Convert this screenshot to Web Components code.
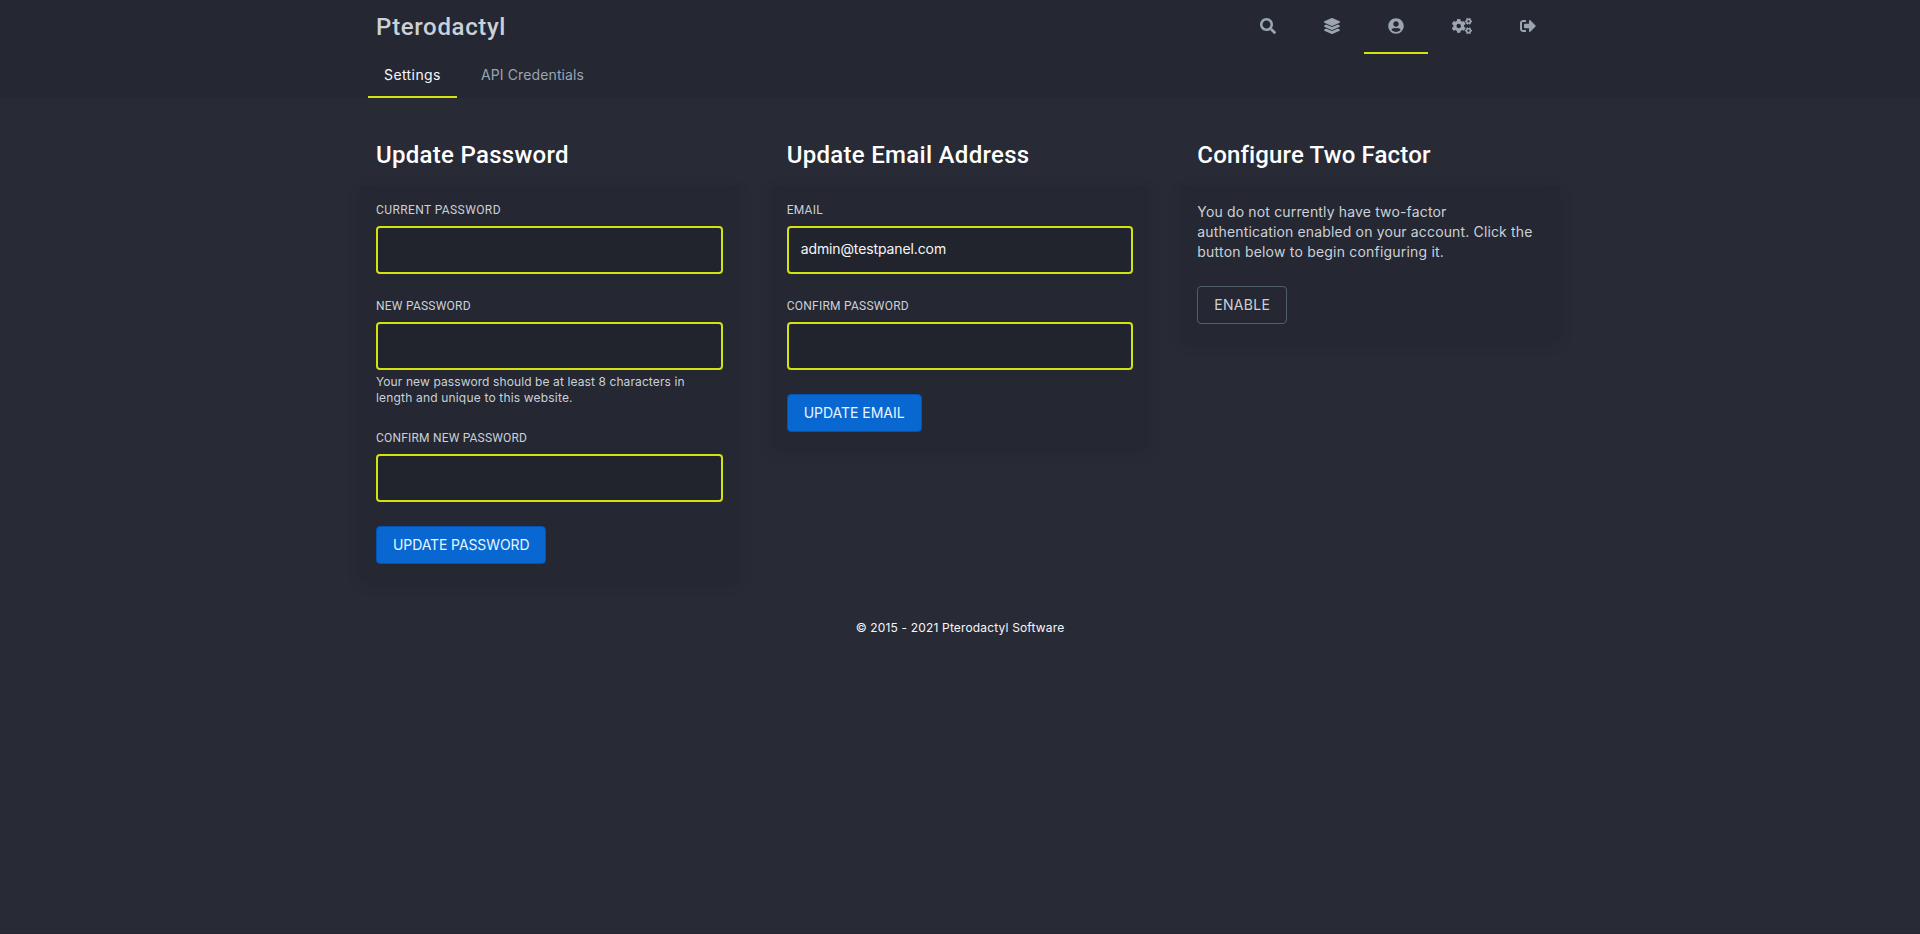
<!DOCTYPE html>
<html lang="en">
<head>
<meta charset="utf-8">
<title>Pterodactyl</title>
<style>
html, body { margin: 0; height: 100%; }
body { background: #282a36; color: #cad1d8; font-family: Roboto, "Liberation Sans", sans-serif; overflow: hidden; }
</style>
</head>
<body>
<account-page></account-page>
<script>
const define = (name, html, setup) => {
  const t = document.createElement('template');
  t.innerHTML = html;
  customElements.define(name, class extends HTMLElement {
    constructor() {
      super();
      this.attachShadow({ mode: 'open' }).append(t.content.cloneNode(true));
    }
    connectedCallback() { if (setup) setup(this, this.shadowRoot); }
  });
};

const smallGear = 'M512.1 191l-8.2 14.3c-3 5.3-9.4 7.5-15.1 5.4-11.8-4.4-22.6-10.7-32.1-18.6-4.6-3.8-5.8-10.5-2.8-15.7l8.2-14.3c-6.9-8-12.3-17.3-15.9-27.4h-16.5c-6 0-11.2-4.3-12.2-10.3-2-12-2.1-24.6 0-37.1 1-6 6.2-10.4 12.2-10.4h16.5c3.6-10.1 9-19.4 15.9-27.4l-8.2-14.3c-3-5.2-1.9-11.9 2.8-15.7 9.5-7.9 20.4-14.2 32.1-18.6 5.7-2.1 12.1.1 15.1 5.4l8.2 14.3c10.5-1.9 21.2-1.9 31.7 0L552 6.3c3-5.3 9.4-7.5 15.1-5.4 11.8 4.4 22.6 10.7 32.1 18.6 4.6 3.8 5.8 10.5 2.8 15.7l-8.2 14.3c6.9 8 12.3 17.3 15.9 27.4h16.5c6 0 11.2 4.3 12.2 10.3 2 12 2.1 24.6 0 37.1-1 6-6.2 10.4-12.2 10.4h-16.5c-3.6 10.1-9 19.4-15.9 27.4l8.2 14.3c3 5.2 1.9 11.9-2.8 15.7-9.5 7.9-20.4 14.2-32.1 18.6-5.7 2.1-12.1-.1-15.1-5.4l-8.2-14.3c-10.4 1.9-21.2 1.9-31.7 0zm-10.5-58.8c38.5 29.6 82.4-14.3 52.8-52.8-38.5-29.7-82.4 14.3-52.8 52.8z';
const icons = {
  search: [512, '<path d="M505 442.7L405.3 343c-4.5-4.5-10.6-7-17-7H372c27.6-35.3 44-79.7 44-128C416 93.1 322.9 0 208 0S0 93.1 0 208s93.1 208 208 208c48.3 0 92.7-16.4 128-44v16.3c0 6.4 2.5 12.5 7 17l99.7 99.7c9.4 9.4 24.6 9.4 33.9 0l28.3-28.3c9.4-9.4 9.4-24.6.1-34zM208 336c-70.7 0-128-57.2-128-128 0-70.7 57.2-128 128-128 70.7 0 128 57.2 128 128 0 70.7-57.2 128-128 128z"/>'],
  layers: [512, '<path d="M12.41 148.02l232.94 105.67c6.8 3.09 14.49 3.09 21.29 0l232.94-105.67c16.55-7.51 16.55-32.52 0-40.03L266.65 2.31a25.607 25.607 0 0 0-21.29 0L12.41 107.98c-16.55 7.51-16.55 32.53 0 40.04zm487.18 88.28l-58.09-26.33-161.64 73.27c-7.56 3.43-15.59 5.17-23.86 5.17s-16.29-1.74-23.86-5.17L70.51 209.97l-58.1 26.33c-16.55 7.5-16.55 32.5 0 40l232.94 105.59c6.8 3.08 14.49 3.08 21.29 0L499.59 276.3c16.55-7.5 16.55-32.5 0-40zm0 127.8l-57.87-26.23-161.86 73.37c-7.56 3.43-15.59 5.17-23.86 5.17s-16.29-1.74-23.86-5.17L70.29 337.87 12.41 364.1c-16.55 7.5-16.55 32.5 0 40l232.94 105.59c6.8 3.08 14.49 3.08 21.29 0L499.59 404.1c16.55-7.5 16.55-32.5 0-40z"/>'],
  user: [496, '<path d="M248 8C111 8 0 119 0 256s111 248 248 248 248-111 248-248S385 8 248 8zm0 96c48.6 0 88 39.4 88 88s-39.4 88-88 88-88-39.4-88-88 39.4-88 88-88zm0 344c-58.7 0-111.3-26.6-146.5-68.2 18.8-35.4 55.6-59.8 98.5-59.8 2.4 0 4.8.4 7.1 1.1 13 4.2 26.6 6.9 40.9 6.9 14.3 0 28-2.7 40.9-6.9 2.3-.7 4.7-1.1 7.1-1.1 42.9 0 79.7 24.4 98.5 59.8C359.3 421.4 306.7 448 248 448z"/>'],
  cogs: [640, `<path d="${smallGear}"/><path transform="translate(0 300.3)" d="${smallGear}"/><path d="M386.3 286.1l33.7 16.8c10.1 5.8 14.5 18.1 10.5 29.1-8.9 24.2-26.4 46.4-42.6 65.8-7.4 8.9-20.2 11.1-30.3 5.3l-29.1-16.8c-16 13.7-34.6 24.6-54.9 31.7v33.6c0 11.6-8.3 21.6-19.7 23.6-24.6 4.2-50.4 4.4-75.9 0-11.5-2-20-11.9-20-23.6V418c-20.3-7.2-38.9-18-54.9-31.7L74 403c-10 5.8-22.9 3.6-30.3-5.3-16.2-19.4-33.3-41.6-42.2-65.7-4-10.9.4-23.2 10.5-29.1l33.3-16.8c-3.9-20.9-3.9-42.4 0-63.4L12 205.8c-10.1-5.8-14.6-18.1-10.5-29 8.9-24.2 26-46.4 42.2-65.8 7.4-8.9 20.2-11.1 30.3-5.3l29.1 16.8c16-13.7 34.6-24.6 54.9-31.7V57.1c0-11.5 8.2-21.5 19.6-23.5 24.6-4.2 50.5-4.4 76-.1 11.5 2 20 11.9 20 23.6v33.6c20.3 7.2 38.9 18 54.9 31.7l29.1-16.8c10-5.8 22.9-3.6 30.3 5.3 16.2 19.4 33.2 41.6 42.1 65.8 4 10.9.1 23.2-10 29.1l-33.7 16.8c3.9 21 3.9 42.5 0 63.5zm-117.6 21.1c59.2-77-28.7-164.9-105.7-105.7-59.2 77 28.7 164.9 105.7 105.7z"/>`],
  logout: [512, '<path d="M497 273L329 441c-15 15-41 4.5-41-17v-96H152c-13.3 0-24-10.7-24-24v-96c0-13.3 10.7-24 24-24h136V88c0-21.4 25.9-32 41-17l168 168c9.3 9.4 9.3 24.6 0 34zM192 436v-40c0-6.6-5.4-12-12-12H96c-17.7 0-32-14.3-32-32V160c0-17.7 14.3-32 32-32h84c6.6 0 12-5.4 12-12V76c0-6.6-5.4-12-12-12H96c-53 0-96 43-96 96v192c0 53 43 96 96 96h84c6.6 0 12-5.4 12-12z"/>']
};

/* One line of text with its own tracking; "wide" switches to the broader face */
define('text-line', `<style>
:host { display: block; white-space: nowrap; }
:host([wide]) { font-family: Inter, Roboto, sans-serif; }
</style><slot></slot>`, el => { el.style.letterSpacing = el.getAttribute('track') + 'px'; });

define('nav-icon', `<style>
:host { display: flex; box-sizing: border-box; height: 54px; padding: 18px 24px 0; color: #9aa5b1; border-bottom: 2px solid transparent; }
:host([active]) { border-bottom-color: #d2e212; }
svg { display: block; width: 16px; height: 16px; fill: currentColor; }
:host([name="cogs"]) svg { width: 20px; }
</style><svg></svg>`, (el, root) => {
  const [w, body] = icons[el.getAttribute('name')];
  const svg = root.querySelector('svg');
  svg.setAttribute('viewBox', `0 0 ${w} 512`);
  svg.innerHTML = body;
});

define('nav-tab', `<style>
:host { display: block; box-sizing: border-box; height: 44px; padding: 11px 0 0 16px; font-size: 14px; line-height: 20px; color: #9aa5b1; border-bottom: 2px solid transparent; }
:host([active]) { width: 89px; color: #f5f7fa; border-bottom-color: #d2e212; }
</style><slot></slot>`);

define('top-bar', `<style>
:host { display: block; height: 98px; background: #252732; }
.in { width: 1200px; margin: 0 auto; }
.row { display: flex; justify-content: space-between; height: 54px; }
.brand { padding: 11px 0 0 16px; font-size: 24px; font-weight: 500; line-height: 32px; }
nav { display: flex; }
.tabs { gap: 8px; padding-left: 8px; }
</style>
<div class="in">
  <div class="row">
    <div class="brand"><text-line track="0.65">Pterodactyl</text-line></div>
    <nav><nav-icon name="search"></nav-icon><nav-icon name="layers"></nav-icon><nav-icon name="user" active></nav-icon><nav-icon name="cogs"></nav-icon><nav-icon name="logout"></nav-icon></nav>
  </div>
  <nav class="tabs">
    <nav-tab active><text-line wide track="0.41">Settings</text-line></nav-tab>
    <nav-tab><text-line wide track="0.118">API Credentials</text-line></nav-tab>
  </nav>
</div>`);

define('content-box', `<style>
:host { display: block; flex: 1 1 0; min-width: 0; }
.title { padding: 1px 16px 15px; color: #fff; font-size: 24px; font-weight: 500; line-height: 32px; }
.card { padding: 16px; background: #252732; border-radius: 4px; box-shadow: 0 4px 15px 0 rgba(0,0,0,.1); }
</style><div class="title"><slot name="title"></slot></div><div class="card"><slot></slot></div>`);

define('form-field', `<style>
:host { display: block; margin-bottom: 24px; }
.label { font-size: 12px; line-height: 16px; margin-bottom: 8px; }
.box { box-sizing: border-box; height: 48px; padding: 11px 12px 0; background: #21242c; border: 2px solid #d2e212; border-radius: 4px; color: #f5f7fa; font-size: 14px; line-height: 20px; }
.hint { font-size: 12px; line-height: 16px; padding-top: 4px; }
:host(:not([hint])) .hint { display: none; }
</style><div class="label"><slot name="label"></slot></div><div class="box"><slot></slot></div><div class="hint"><slot name="hint"></slot></div>`);

define('push-button', `<style>
:host { display: block; box-sizing: border-box; height: 38px; padding: 8px 0 0 16px; border: 1px solid #0552b5; border-radius: 4px; background: #0967d2; color: #e6f6ff; font-size: 14px; line-height: 20px; }
:host([outline]) { background: none; border-color: #515f6c; color: #cad1d8; }
</style><slot></slot>`, el => { el.style.width = el.getAttribute('size') + 'px'; });

define('account-page', `<style>
:host { display: flex; flex-direction: column; box-sizing: border-box; height: 100vh; border-bottom: 1px solid #292431; }
main { display: flex; align-items: flex-start; gap: 32px; width: 1200px; margin: 40px auto 0; }
.copy { font-size: 14px; line-height: 20px; margin-bottom: 24px; }
footer { display: flex; justify-content: center; margin-top: 40px; color: #f5f7fa; font-size: 12px; line-height: 16px; }
</style>
<top-bar></top-bar>
<main>
  <content-box>
    <text-line slot="title" track="0.285">Update Password</text-line>
    <form-field><text-line slot="label" track="0.4">CURRENT PASSWORD</text-line></form-field>
    <form-field hint><text-line slot="label" track="0.23">NEW PASSWORD</text-line>
      <text-line wide slot="hint" track="0.102">Your new password should be at least 8 characters in</text-line>
      <text-line wide slot="hint" track="0.177">length and unique to this website.</text-line></form-field>
    <form-field><text-line slot="label" track="0.19">CONFIRM NEW PASSWORD</text-line></form-field>
    <push-button size="170"><text-line wide track="-0.107">UPDATE PASSWORD</text-line></push-button>
  </content-box>
  <content-box>
    <text-line slot="title" track="0.297">Update Email Address</text-line>
    <form-field><text-line slot="label" track="0.258">EMAIL</text-line><text-line wide track="-0.114">admin@testpanel.com</text-line></form-field>
    <form-field><text-line slot="label" track="0.241">CONFIRM PASSWORD</text-line></form-field>
    <push-button size="135"><text-line wide track="-0.023">UPDATE EMAIL</text-line></push-button>
  </content-box>
  <content-box>
    <text-line slot="title" track="0.15">Configure Two Factor</text-line>
    <div class="copy">
      <text-line wide track="0.154">You do not currently have two-factor</text-line>
      <text-line wide track="0.146">authentication enabled on your account. Click the</text-line>
      <text-line wide track="0.201">button below to begin configuring it.</text-line>
    </div>
    <push-button outline size="90"><text-line wide track="0.275">ENABLE</text-line></push-button>
  </content-box>
</main>
<footer><text-line wide track="0.16">© 2015 - 2021 Pterodactyl Software</text-line></footer>`);
</script>
</body>
</html>
